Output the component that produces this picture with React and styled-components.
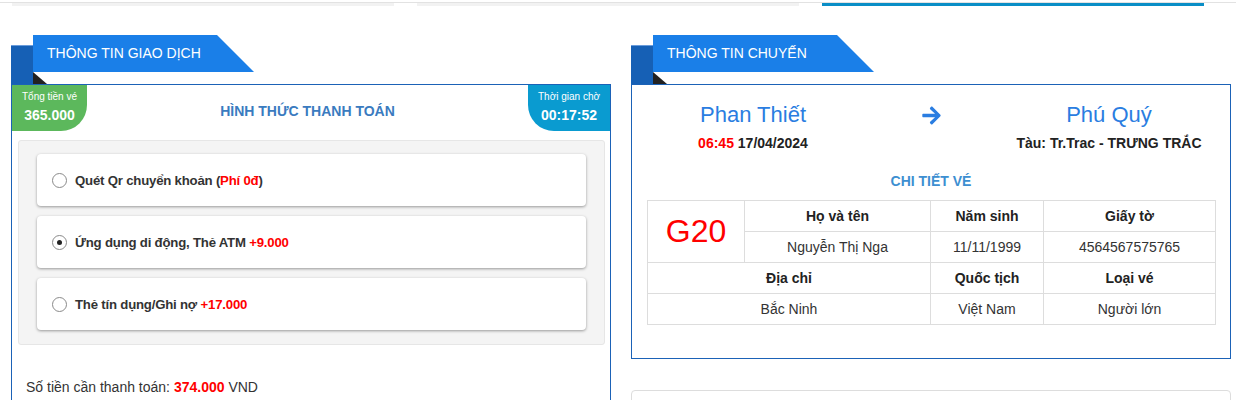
import styled, { createGlobalStyle } from "styled-components"
import { FaArrowRight } from "react-icons/fa"

const GlobalStyle = createGlobalStyle`
  body {
    margin: 0;
    background: #fff;
    font-family: "Liberation Sans", Arial, sans-serif;
    font-size: 14px;
    color: #333;
  }
`

const options = [
  { label: "Quét Qr chuyển khoản (", fee: "Phí 0đ", tail: ")", checked: false },
  { label: "Ứng dụng di động, Thẻ ATM ", fee: "+9.000", tail: "", checked: true },
  { label: "Thẻ tín dụng/Ghi nợ ", fee: "+17.000", tail: "", checked: false },
]

function Radio({ checked }) {
  return <RadioCircle>{checked && <RadioDot />}</RadioCircle>
}

function SectionHead({ title }) {
  return (
    <Head>
      <Ribbon>{title}</Ribbon>
    </Head>
  )
}

function App() {
  return (
    <>
      <GlobalStyle />
      <Strip>
        <StripLine />
        <Tabs>
          <Tab />
          <Tab />
          <Tab active />
        </Tabs>
      </Strip>
      <Page>
        <Column>
          <SectionHead title="THÔNG TIN GIAO DỊCH" />
          <Card>
            <PayHeader>
              <Badge bg="#5cb85c" corner="0 0 26px 0" w={75}>
                <small>Tổng tiền vé</small>
                <b>365.000</b>
              </Badge>
              <PayTitle>HÌNH THỨC THANH TOÁN</PayTitle>
              <Badge bg="#0a9bd0" corner="0 0 0 26px" w={82}>
                <small>Thời gian chờ</small>
                <b>00:17:52</b>
              </Badge>
            </PayHeader>
            <OptionBox>
              {options.map((o) => (
                <Option key={o.fee}>
                  <Radio checked={o.checked} />
                  <span>
                    {o.label}
                    <Red>{o.fee}</Red>
                    {o.tail}
                  </span>
                </Option>
              ))}
            </OptionBox>
            <Summary>
              Số tiền cần thanh toán: <Red bold>374.000</Red> VND
            </Summary>
          </Card>
        </Column>

        <Column>
          <SectionHead title="THÔNG TIN CHUYẾN" />
          <TripCard>
            <Route>
              <Stop>
                <City>Phan Thiết</City>
                <Sub>
                  <Red>06:45</Red> 17/04/2024
                </Sub>
              </Stop>
              <Arrow>
                <FaArrowRight size={21} />
              </Arrow>
              <Stop>
                <City>Phú Quý</City>
                <Sub>Tàu: Tr.Trac - TRƯNG TRẮC</Sub>
              </Stop>
            </Route>
            <DetailTitle>CHI TIẾT VÉ</DetailTitle>
            <Ticket>
              <colgroup>
                <col style={{ width: 97 }} />
                <col style={{ width: 186 }} />
                <col style={{ width: 113 }} />
                <col style={{ width: 172 }} />
              </colgroup>
              <tbody>
                <tr>
                  <Seat rowSpan={2}>G20</Seat>
                  <Th>Họ và tên</Th>
                  <Th>Năm sinh</Th>
                  <Th>Giấy tờ</Th>
                </tr>
                <tr>
                  <Td>Nguyễn Thị Nga</Td>
                  <Td>11/11/1999</Td>
                  <Td>4564567575765</Td>
                </tr>
                <tr>
                  <Th colSpan={2}>Địa chỉ</Th>
                  <Th>Quốc tịch</Th>
                  <Th>Loại vé</Th>
                </tr>
                <tr>
                  <Td colSpan={2}>Bắc Ninh</Td>
                  <Td>Việt Nam</Td>
                  <Td>Người lớn</Td>
                </tr>
              </tbody>
            </Ticket>
          </TripCard>
          <NextCard />
        </Column>
      </Page>
    </>
  )
}

const Strip = styled.div`
  padding-top: 2px;
`
const StripLine = styled.div`
  height: 1px;
  background: #e2e2e2;
`
const Tabs = styled.div`
  display: flex;
  gap: 23px;
  width: 1192px;
  padding-left: 12px;
`
const Tab = styled.div`
  flex: 1;
  height: 3px;
  background: ${(p) => (p.active ? "#0a8ec6" : "#f2f2f2")};
`

const Page = styled.div`
  display: grid;
  grid-template-columns: 600px 600px;
  gap: 20px;
  padding: 29px 0 0 11px;
`
const Column = styled.div`
  display: flex;
  flex-direction: column;
`

const Head = styled.div`
  position: relative;
  height: 49px;
  &::before {
    content: "";
    position: absolute;
    left: 0;
    top: 10px;
    width: 22px;
    height: 38px;
    background: #1660b5;
    border-top: 1px solid #6a9cdb;
  }
  &::after {
    content: "";
    position: absolute;
    left: 22px;
    top: 37px;
    width: 14px;
    height: 12px;
    background: #222;
    clip-path: polygon(0 0, 100% 100%, 0 100%);
  }
`
const Ribbon = styled.div`
  position: relative;
  z-index: 1;
  margin-left: 22px;
  width: 221px;
  height: 37px;
  box-sizing: border-box;
  padding-left: 14px;
  line-height: 37px;
  font-size: 14px;
  color: #fff;
  background: #1a7fe8;
  clip-path: polygon(0 0, 184px 0, 100% 100%, 0 100%);
`

const Card = styled.div`
  border: 1px solid #1b62b7;
  box-sizing: border-box;
  height: 340px;
  overflow: hidden;
`
const PayHeader = styled.div`
  display: flex;
  align-items: flex-start;
  justify-content: space-between;
`
const Badge = styled.div`
  width: ${(p) => p.w}px;
  height: 46px;
  box-sizing: border-box;
  padding-top: 5px;
  background: ${(p) => p.bg};
  border-radius: ${(p) => p.corner};
  color: #fff;
  display: flex;
  flex-direction: column;
  align-items: center;
  small {
    font-size: 10px;
    line-height: 13px;
  }
  b {
    margin-top: 3px;
    font-size: 14px;
    line-height: 18px;
  }
`
const PayTitle = styled.div`
  padding-top: 18px;
  font-size: 14px;
  font-weight: bold;
  color: #3a7bbf;
`
const OptionBox = styled.div`
  margin: 9px 5px 0 6px;
  padding: 13px 18px 14px;
  background: #f4f4f4;
  border: 1px solid #e6e6e6;
  border-radius: 3px;
  display: flex;
  flex-direction: column;
  gap: 10px;
`
const Option = styled.div`
  height: 52px;
  display: flex;
  align-items: center;
  gap: 8px;
  padding: 0 15px;
  background: #fff;
  border-radius: 4px;
  box-shadow: 0 1px 3px rgba(0, 0, 0, 0.38);
  font-size: 13.2px;
  letter-spacing: -0.2px;
  font-weight: bold;
  color: #333;
`
const RadioCircle = styled.span`
  width: 13px;
  height: 13px;
  border: 1px solid #8a8a8a;
  border-radius: 50%;
  background: #fff;
  display: flex;
  align-items: center;
  justify-content: center;
  flex-shrink: 0;
`
const RadioDot = styled.span`
  width: 5px;
  height: 5px;
  border-radius: 50%;
  background: #222;
`
const Red = styled.span`
  color: #f00;
  font-weight: ${(p) => (p.bold ? "bold" : "inherit")};
`
const Summary = styled.div`
  margin-top: 32px;
  padding: 0 14px;
  line-height: 20px;
  font-size: 14px;
  color: #333;
`

const TripCard = styled.div`
  border: 1px solid #1b62b7;
  padding: 15px 15px 33px;
`
const Route = styled.div`
  display: grid;
  grid-template-columns: 212px 144px 212px;
  align-items: start;
`
const Stop = styled.div`
  text-align: center;
`
const City = styled.div`
  font-size: 22px;
  line-height: 30px;
  color: #2a7de1;
`
const Sub = styled.div`
  margin-top: 3px;
  font-size: 14px;
  line-height: 20px;
  font-weight: bold;
  color: #222;
`
const Arrow = styled.div`
  display: flex;
  justify-content: center;
  padding-top: 5px;
  color: #2a7de1;
`
const DetailTitle = styled.div`
  margin-top: 18px;
  text-align: center;
  font-size: 14px;
  line-height: 20px;
  font-weight: bold;
  color: #3d8fd1;
`
const Ticket = styled.table`
  margin-top: 9px;
  width: 568px;
  border-collapse: collapse;
  table-layout: fixed;
  font-size: 14px;
`
const Th = styled.td`
  height: 30px;
  padding: 0;
  border: 1px solid #ddd;
  text-align: center;
  font-weight: bold;
  color: #222;
`
const Td = styled(Th)`
  font-weight: normal;
  color: #333;
`
const Seat = styled(Th)`
  font-weight: normal;
  font-size: 32px;
  color: #f00;
`
const NextCard = styled.div`
  margin-top: 31px;
  height: 40px;
  border: 1px solid #ddd;
  border-radius: 4px;
`

export default App
